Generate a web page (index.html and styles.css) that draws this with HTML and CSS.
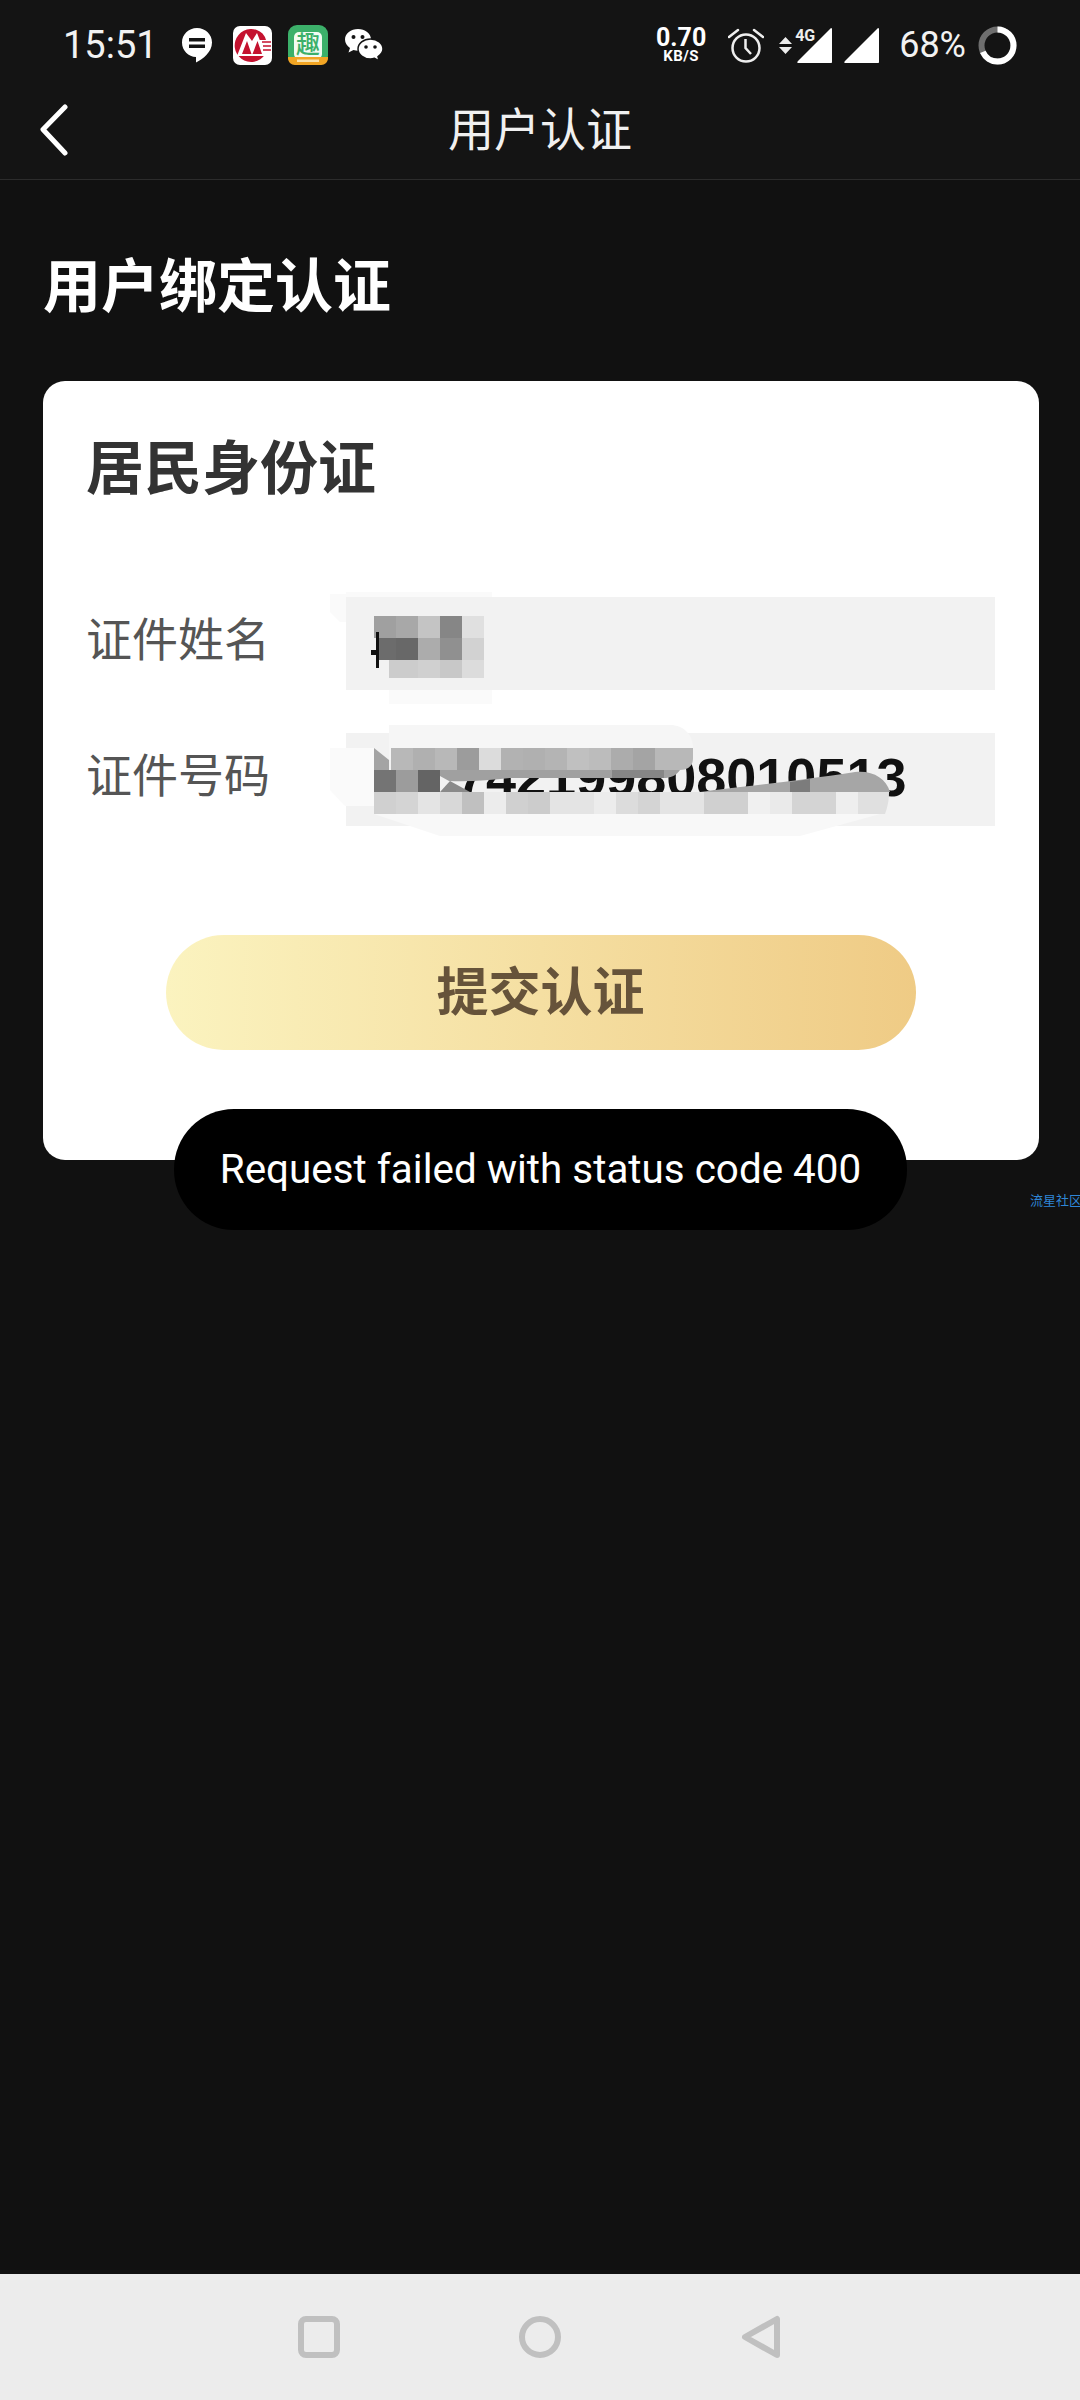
FILE: index.html
```html
<!DOCTYPE html>
<html lang="zh-CN">
<head>
    <meta charset="UTF-8">
    <meta name="viewport" content="width=device-width, initial-scale=1.0">
    <title>用户认证</title>
    <link rel="stylesheet" href="styles.css">
</head>
<body>

<div class="statusbar">
    <div class="status-left">
        <span class="time">15:51</span>
        <svg class="ic-msg" width="32" height="36" viewBox="0 0 32 36">
            <path d="M16 1C7.5 1 1 7.5 1 15.5S7.5 30 15 30V35.5C22 32 31 25 31 15.5 31 7.5 24.500 1 16 1Z" fill="#fff"/>
            <rect x="8" y="11" width="16" height="3.500" fill="#141414"/>
            <rect x="8" y="17.500" width="16" height="3.500" fill="#141414"/>
        </svg>
        <svg class="ic-cmb" width="39" height="39" viewBox="0 0 39 39">
            <rect width="39" height="39" rx="7" fill="#fff"/>
            <path d="M29.500 7.500A16.500 16.500 0 1 0 32 28.500H20V14H33A16 16 0 0 0 29.500 7.500Z" fill="#c4122f"/>
            <path d="M4 30L13 7 19 15 24 7 33 30H4Z" fill="#fff"/>
            <path d="M9 28L14 15 18.500 28ZM19.500 28L24.500 15 29 28Z" fill="#c4122f"/>
            <path d="M29 16H38M30 20H38M30 24H38" stroke="#c4122f" stroke-width="1.500"/>
        </svg>
        <svg class="ic-qu" width="40" height="40" viewBox="0 0 40 40">
            <rect width="40" height="40" rx="9" fill="#3cb06a"/>
            <rect x="6" y="7" width="28" height="27" rx="5" fill="#f3fbf2"/>
            <text x="20" y="28" class="qu-char">趣</text>
            <path d="M0 32H40V33C40 37 37 40 33 40H7C3 40 0 37 0 33Z" fill="#f2a524"/>
            <rect x="9" y="34.500" width="22" height="2.500" fill="#fbe3ad"/>
        </svg>
        <svg class="ic-wx" width="38" height="32" viewBox="0 0 38 32">
            <path d="M13 0C6 0 0 4.500 0 10.500 0 14 2 17 5 19L3.500 23.500 8.500 21C10 21.500 11.500 21.700 13 21.700 20 21.700 26 17 26 10.500 26 4.500 20 0 13 0Z" fill="#fff"/>
            <circle cx="8.500" cy="8" r="2" fill="#141414"/>
            <circle cx="17.500" cy="8" r="2" fill="#141414"/>
            <path d="M25.500 10C18.500 10 13 14.500 13 20S18.500 30 25.500 30C27 30 28 29.800 29.500 29.300L34 32 33 27.500C36 25.500 38 23 38 20 38 14.500 32.500 10 25.500 10Z" fill="#fff" stroke="#141414" stroke-width="1.500"/>
            <circle cx="21" cy="18" r="1.800" fill="#141414"/>
            <circle cx="30" cy="18" r="1.800" fill="#141414"/>
        </svg>
    </div>
    <div class="status-right">
        <div class="speed">
            <span class="speed-num">0.70</span>
            <span class="speed-unit">KB/S</span>
        </div>
        <svg class="ic-alarm" width="36" height="35" viewBox="0 0 36 35">
            <circle cx="18" cy="20" r="13.500" fill="none" stroke="#eee" stroke-width="2.500"/>
            <path d="M17.500 11V20L23 26" fill="none" stroke="#eee" stroke-width="2.500"/>
            <path d="M1 9L10 2M35 9L26 2" stroke="#eee" stroke-width="2.500" stroke-linecap="round"/>
        </svg>
        <div class="signal-4g">
            <svg class="ic-arrows" width="13" height="17" viewBox="0 0 13 17">
                <path d="M6.500 0L13 7H0ZM0 10H13L6.500 17Z" fill="#eee"/>
            </svg>
            <svg class="ic-signal" width="35" height="35" viewBox="0 0 35 35">
                <path d="M34 0C35 0 35 1 35 1V34C35 35 34 35 34 35H1C0 35 0 34 1 33Z" fill="#fff"/>
            </svg>
            <span class="label-4g">4G</span>
        </div>
        <svg class="ic-signal" width="35" height="35" viewBox="0 0 35 35">
            <path d="M34 0C35 0 35 1 35 1V34C35 35 34 35 34 35H1C0 35 0 34 1 33Z" fill="#fff"/>
        </svg>
        <span class="battery-text">68%</span>
        <svg class="ic-battery" width="39" height="39" viewBox="0 0 39 39">
            <circle cx="19.500" cy="19.500" r="16" fill="none" stroke="#6e6e6e" stroke-width="6"/>
            <circle cx="19.500" cy="19.500" r="16" fill="none" stroke="#fff" stroke-width="6" stroke-dasharray="68.400 100.530" transform="rotate(-90 19.500 19.500)"/>
        </svg>
    </div>
</div>

<div class="header">
    <svg class="back" width="30" height="52" viewBox="0 0 30 52">
        <path d="M26 3L4 25.500 26 49" fill="none" stroke="#fff" stroke-width="5" stroke-linecap="round" stroke-linejoin="round"/>
    </svg>
    <span class="header-title">用户认证</span>
</div>

<div class="content">
    <h1 class="page-title">用户绑定认证</h1>
    <div class="card">
        <h2 class="card-title">居民身份证</h2>
        <div class="form-row">
            <label class="form-label">证件姓名</label>
            <div class="form-field"></div>
        </div>
        <div class="form-row form-row-second">
            <label class="form-label">证件号码</label>
            <div class="form-field field-number">742199808010513</div>
        </div>
        <button class="submit"><span class="submit-text">提交认证</span></button>
    </div>
</div>

<!-- the blurred out name and id number -->
<svg class="retouch" width="1080" height="850" viewBox="0 0 1080 850">
    <g transform="translate(0 -570)">
        <path d="M330 594H346V592H492V597H346V690H492V704H389V690H346V622H340L330 612Z" fill="#fafafa"/>
        <rect x="374" y="616" width="22" height="22" fill="#a0a0a0"/>
        <rect x="396" y="616" width="22" height="22" fill="#a8a8a8"/>
        <rect x="418" y="616" width="22" height="22" fill="#c4c4c4"/>
        <rect x="440" y="616" width="22" height="22" fill="#868686"/>
        <rect x="462" y="616" width="22" height="22" fill="#e0e0e0"/>
        <rect x="379" y="638" width="17" height="22" fill="#6c6c6c"/>
        <rect x="396" y="638" width="22" height="22" fill="#686868"/>
        <rect x="418" y="638" width="22" height="22" fill="#acacac"/>
        <rect x="440" y="638" width="22" height="22" fill="#909090"/>
        <rect x="462" y="638" width="22" height="22" fill="#d2d2d2"/>
        <rect x="389" y="660" width="29" height="18" fill="#cccccc"/>
        <rect x="418" y="660" width="22" height="18" fill="#d0d0d0"/>
        <rect x="440" y="660" width="22" height="18" fill="#c8c8c8"/>
        <rect x="462" y="660" width="22" height="18" fill="#dcdcdc"/>
        <path d="M376 632H379V668H376V655H371V650H376Z" fill="#111"/>

        <path d="M389 725H670C684 725 693 735 693 748V760H389Z" fill="#f6f6f6"/>
        <path d="M330 748H374V806L345 806 330 790Z" fill="#fafafa"/>
        <path d="M374 814H880L800 836H440Z" fill="#f8f8f8"/>
        <path d="M374 748L389 760V770H374Z" fill="#a4a4a4"/>
        <rect x="391" y="748" width="22" height="22" fill="#b8b8b8"/>
        <rect x="413" y="748" width="22" height="22" fill="#b0b0b0"/>
        <rect x="435" y="748" width="22" height="22" fill="#b8b8b8"/>
        <rect x="457" y="748" width="22" height="22" fill="#9c9c9c"/>
        <rect x="479" y="748" width="22" height="22" fill="#dcdcdc"/>
        <rect x="501" y="748" width="22" height="22" fill="#b2b2b2"/>
        <rect x="523" y="748" width="22" height="22" fill="#b0b0b0"/>
        <rect x="545" y="748" width="22" height="22" fill="#b4b4b4"/>
        <rect x="567" y="748" width="22" height="22" fill="#c0c0c0"/>
        <rect x="589" y="748" width="22" height="22" fill="#bcbcbc"/>
        <rect x="611" y="748" width="22" height="22" fill="#acacac"/>
        <rect x="633" y="748" width="22" height="22" fill="#a4a4a4"/>
        <path d="M655 748H693V758C693 766 688 770 680 770H655Z" fill="#b8b8b8"/>
        <rect x="374" y="770" width="22" height="22" fill="#747474"/>
        <rect x="396" y="770" width="22" height="22" fill="#9c9c9c"/>
        <rect x="418" y="770" width="22" height="22" fill="#646464"/>
        <path d="M440 770H680C676 776 670 778 664 778H510C490 780 470 782 449 781L440 776Z" fill="#a0a0a0"/>
        <path d="M612 770H664V778H612Z" fill="#868686"/>
        <path d="M450 781L470 792H440Z" fill="#8a8a8a"/>
        <path d="M700 792C730 788 790 782 855 772 872 770 886 778 890 792Z" fill="#a6a6a6"/>
        <path d="M790 782L810 779V792H790Z" fill="#7c7c7c"/>
        <rect x="374" y="792" width="22" height="22" fill="#d0d0d0"/>
        <rect x="396" y="792" width="22" height="22" fill="#d4d4d4"/>
        <rect x="418" y="792" width="22" height="22" fill="#e4e4e4"/>
        <rect x="440" y="792" width="22" height="22" fill="#d8d8d8"/>
        <rect x="462" y="792" width="22" height="22" fill="#c0c0c0"/>
        <rect x="484" y="792" width="22" height="22" fill="#ececec"/>
        <rect x="506" y="792" width="22" height="22" fill="#d0d0d0"/>
        <rect x="528" y="792" width="22" height="22" fill="#cccccc"/>
        <rect x="550" y="792" width="44" height="22" fill="#e4e4e4"/>
        <rect x="594" y="792" width="22" height="22" fill="#ececec"/>
        <rect x="616" y="792" width="22" height="22" fill="#dcdcdc"/>
        <rect x="638" y="792" width="22" height="22" fill="#d4d4d4"/>
        <rect x="660" y="792" width="44" height="22" fill="#e4e4e4"/>
        <rect x="704" y="792" width="44" height="22" fill="#d0d0d0"/>
        <rect x="748" y="792" width="22" height="22" fill="#f0f0f0"/>
        <rect x="770" y="792" width="22" height="22" fill="#eaeaea"/>
        <rect x="792" y="792" width="44" height="22" fill="#d4d4d4"/>
        <rect x="836" y="792" width="22" height="22" fill="#eeeeee"/>
        <path d="M858 792H889C889 802 887 808 885 814H858Z" fill="#e0e0e0"/>
    </g>
</svg>

<div class="toast">Request failed with status code 400</div>
<span class="watermark">流星社区</span>

<div class="navbar">
    <svg width="44" height="44" viewBox="0 0 44 44">
        <rect x="4" y="4" width="36" height="36" rx="5" fill="none" stroke="#c0c0c0" stroke-width="6"/>
    </svg>
    <svg width="44" height="44" viewBox="0 0 44 44">
        <circle cx="22" cy="22" r="18" fill="none" stroke="#c0c0c0" stroke-width="6"/>
    </svg>
    <svg width="44" height="44" viewBox="0 0 44 44">
        <path d="M38 4V40L6 22Z" fill="none" stroke="#c0c0c0" stroke-width="6" stroke-linejoin="round"/>
    </svg>
</div>

</body>
</html>
```

FILE: styles.css
```css
* { box-sizing: border-box; }
html, body { margin: 0; padding: 0; }
body {
    width: 1080px;
    height: 2400px;
    position: relative;
    display: flex;
    flex-direction: column;
    overflow: hidden;
    background: #111;
    font-family: "Noto Sans CJK SC", "Noto Sans", sans-serif;
}

/* status bar */
.statusbar {
    height: 75px;
    padding: 21px 63px 0 63px;
    background: #141414;
    display: flex;
    justify-content: space-between;
    align-items: flex-start;
}
.status-left, .status-right { display: flex; align-items: center; height: 48px; }
.time { font: 400 38px Roboto, sans-serif; color: #f2f2f2; width: 118px; }
.ic-cmb { margin-left: 20px; }
.ic-qu { margin-left: 16px; }
.ic-wx { margin-left: 17px; }
.qu-char { font: 500 24px "Noto Sans CJK SC", sans-serif; fill: #3cb06a; text-anchor: middle; }

.speed { display: flex; flex-direction: column; align-items: center; width: 48px; font-family: Roboto, sans-serif; font-weight: 700; color: #fff; }
.speed-num { font-size: 25px; line-height: 22px; }
.speed-unit { font-size: 15px; line-height: 14px; letter-spacing: 0.5px; }
.ic-alarm { margin-left: 23px; }
.signal-4g { position: relative; display: flex; align-items: center; margin-left: 15px; }
.ic-arrows { margin-right: 5px; }
.label-4g { position: absolute; left: 16px; top: -2px; font: 700 16px Roboto, sans-serif; color: #eee; }
.signal-4g + .ic-signal { margin-left: 12px; }
.battery-text { font: 400 36px Roboto, sans-serif; color: #f2f2f2; margin-left: 20px; }
.ic-battery { margin-left: 12px; }

/* title bar */
.header {
    height: 105px;
    background: #141414;
    border-bottom: 1px solid #2c2c2c;
    display: flex;
    align-items: center;
    justify-content: center;
    position: relative;
}
.back { position: absolute; left: 39px; top: 29px; }
.header-title { font-size: 46px; line-height: 56px; color: #f0f0f0; margin-bottom: 2px; }

/* main */
.content { flex: 1; padding: 73px 41px 0 43px; }
.page-title { margin: 0 0 70px; font-size: 58px; line-height: 58px; font-weight: 700; color: #fff; }
.card { background: #fff; border-radius: 22px; padding: 54px 44px 110px 43px; }
.card-title { margin: 0 0 104px; font-size: 58px; line-height: 58px; font-weight: 700; color: #333; }
.form-row { display: flex; align-items: center; height: 93px; }
.form-row-second { margin-top: 43px; }
.form-label { width: 260px; font-size: 46px; color: #555; margin-bottom: 15px; }
.form-field {
    flex: 1;
    height: 100%;
    background: #f2f2f2;
    display: flex;
    align-items: center;
}
.field-number {
    padding-left: 110px;
    padding-bottom: 6px;
    font: 700 54px "Liberation Sans", Arial, sans-serif;
    color: #111;
}
.submit {
    display: block;
    width: 750px;
    height: 115px;
    margin: 109px auto 0;
    padding: 0 0 8px;
    border: 0;
    border-radius: 58px;
    background: linear-gradient(90deg, #fbf3bf 0%, #efcb85 100%);
    font-family: inherit;
    font-size: 52px;
    font-weight: 700;
    color: #66533a;
}

/* things lying over the page */
.retouch { position: absolute; left: 0; top: 570px; }
.toast {
    position: absolute;
    left: 174px;
    top: 1109px;
    width: 733px;
    height: 121px;
    border-radius: 60px;
    background: #000;
    color: #fff;
    font: 400 40.400px Roboto, sans-serif;
    display: flex;
    align-items: center;
    justify-content: center;
}
.watermark { position: absolute; left: 1030px; top: 1191px; font-size: 13px; line-height: 18px; color: #2f86d6; white-space: nowrap; }

/* android nav */
.navbar {
    height: 126px;
    background: #ececec;
    display: flex;
    align-items: center;
    justify-content: center;
    gap: 177px;
}
```
